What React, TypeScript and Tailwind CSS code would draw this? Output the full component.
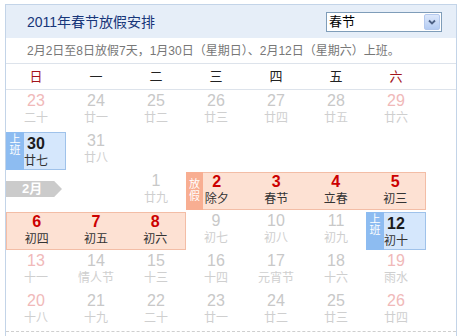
import { FC } from 'react';
import clsx from 'clsx';

type Tone = 'gray' | 'pink';

interface DayProps {
  n: number;
  l: string;
  tone?: Tone;
}

const weekdays = ['日', '一', '二', '三', '四', '五', '六'];

const Day: FC<DayProps> = ({ n, l, tone = 'gray' }) => (
  <div className="flex h-10 flex-col items-center pt-px">
    <span
      className={clsx(
        'text-[16px] leading-[18px]',
        tone === 'pink' ? 'text-[#f0b9b9]' : 'text-[#c8c8c8]'
      )}
    >
      {n}
    </span>
    <span className="text-[12px] leading-[16px] text-[#cfcfcf]">{l}</span>
  </div>
);

const WorkDay: FC<{ n: number; l: string }> = ({ n, l }) => (
  <div className="relative my-px flex h-[38px] flex-col items-center border border-[#9fc2ea] bg-[#d5e7fc]">
    <div className="absolute -left-px -top-px flex h-[38px] w-[18px] flex-col items-center bg-[#8dbcf1] pt-[2px] text-[11px] leading-[11px] text-white">
      <span>上</span>
      <span>班</span>
    </div>
    <span className="pt-[2px] text-[16px] font-bold leading-[18px] text-[#1c1c1c]">{n}</span>
    <span className="text-[12px] leading-[16px] text-[#333]">{l}</span>
  </div>
);

const Band: FC<{ span: string; days: [number, string][]; tag?: boolean }> = ({
  span,
  days,
  tag,
}) => (
  <div className={clsx('relative my-px flex h-[38px] border border-[#f3bda6] bg-[#fde1d3]', span)}>
    {tag && (
      <div className="absolute -left-px -top-px flex h-[38px] w-[17px] flex-col items-center justify-center bg-[#f8ae92] pb-[2px] text-[11px] leading-[12px] text-white">
        <span>放</span>
        <span>假</span>
      </div>
    )}
    {days.map(([n, l]) => (
      <div key={n} className="flex flex-1 flex-col items-center">
        <span className="text-[16px] font-bold leading-[18px] text-[#cc0000]">{n}</span>
        <span className="text-[12px] leading-[16px] text-[#333]">{l}</span>
      </div>
    ))}
  </div>
);

const row1: DayProps[] = [
  { n: 23, l: '二十', tone: 'pink' },
  { n: 24, l: '廿一' },
  { n: 25, l: '廿二' },
  { n: 26, l: '廿三' },
  { n: 27, l: '廿四' },
  { n: 28, l: '廿五' },
  { n: 29, l: '廿六', tone: 'pink' },
];

const row5: DayProps[] = [
  { n: 13, l: '十一', tone: 'pink' },
  { n: 14, l: '情人节' },
  { n: 15, l: '十三' },
  { n: 16, l: '十四' },
  { n: 17, l: '元宵节' },
  { n: 18, l: '十六' },
  { n: 19, l: '雨水', tone: 'pink' },
];

const row6: DayProps[] = [
  { n: 20, l: '十八', tone: 'pink' },
  { n: 21, l: '十九' },
  { n: 22, l: '二十' },
  { n: 23, l: '廿一' },
  { n: 24, l: '廿二' },
  { n: 25, l: '廿三' },
  { n: 26, l: '廿四', tone: 'pink' },
];

const App: FC = () => (
  <div className="h-[336px] w-[459px] overflow-hidden bg-white pl-[5px] pt-[4px] font-['Liberation_Sans','Noto_Sans_CJK_SC',sans-serif]">
    <div className="h-[340px] w-[452px] border border-[#c3d4e8]">
      {/* header */}
      <div className="flex h-[33px] items-center justify-between bg-[#e6eef8] pl-[21px] pr-[14px]">
        <span className="text-[14px] leading-[18px] text-[#17367a]">2011年春节放假安排</span>
        <div className="flex h-5 w-[116px] items-center border border-[#7f9db9] bg-white">
          <span className="flex-1 pl-[2px] text-[13px] leading-[18px] text-black">春节</span>
          <span className="mr-px flex h-4 w-4 items-center justify-center rounded-[2px] border border-[#b4c9ee] bg-gradient-to-b from-[#dde8fb] to-[#b4ccf3]">
            <svg width="8" height="6" viewBox="0 0 8 6">
              <path d="M1 1.5 L4 4.5 L7 1.5" fill="none" stroke="#4d6185" strokeWidth="1.8" />
            </svg>
          </span>
        </div>
      </div>
      <div className="flex h-[26px] items-center border-b border-[#dde3eb] pl-[21px] text-[12px] leading-[16px] text-[#777]">
        2月2日至8日放假7天，1月30日（星期日）、2月12日（星期六）上班。
      </div>
      <div className="h-[26px] border-b border-[#dde3eb]">
        <div className="grid h-full w-[420px] grid-cols-7 items-center text-[13px]">
          {weekdays.map((w, i) => (
            <span
              key={w}
              className={clsx('text-center', i === 0 || i === 6 ? 'text-[#a3141b]' : 'text-[#222]')}
            >
              {w}
            </span>
          ))}
        </div>
      </div>

      {/* days */}
      <div className="w-[420px] pt-px">
        <div className="grid grid-cols-7">
          {row1.map((d) => (
            <Day key={d.n} {...d} />
          ))}
        </div>
        <div className="grid grid-cols-7">
          <WorkDay n={30} l="廿七" />
          <Day n={31} l="廿八" />
        </div>
        <div className="grid grid-cols-7">
          <div className="col-span-2 pt-[10px]">
            <div className="flex h-4 w-[56px] items-center bg-[#cbcbcb] pl-[16px] text-[13px] font-bold leading-4 text-white [clip-path:polygon(0_0,86%_0,100%_50%,86%_100%,0_100%)]">
              2月
            </div>
          </div>
          <Day n={1} l="廿九" />
          <Band
            span="col-span-4"
            tag
            days={[
              [2, '除夕'],
              [3, '春节'],
              [4, '立春'],
              [5, '初三'],
            ]}
          />
        </div>
        <div className="grid grid-cols-7">
          <Band
            span="col-span-3"
            days={[
              [6, '初四'],
              [7, '初五'],
              [8, '初六'],
            ]}
          />
          <Day n={9} l="初七" />
          <Day n={10} l="初八" />
          <Day n={11} l="初九" />
          <WorkDay n={12} l="初十" />
        </div>
        <div className="grid grid-cols-7">
          {row5.map((d) => (
            <Day key={d.n} {...d} />
          ))}
        </div>
        <div className="grid grid-cols-7">
          {row6.map((d) => (
            <Day key={d.n} {...d} />
          ))}
        </div>
      </div>
      <div className="w-[450px] border-t border-dashed border-[#cfcfcf]" />
    </div>
  </div>
);

export default App;
